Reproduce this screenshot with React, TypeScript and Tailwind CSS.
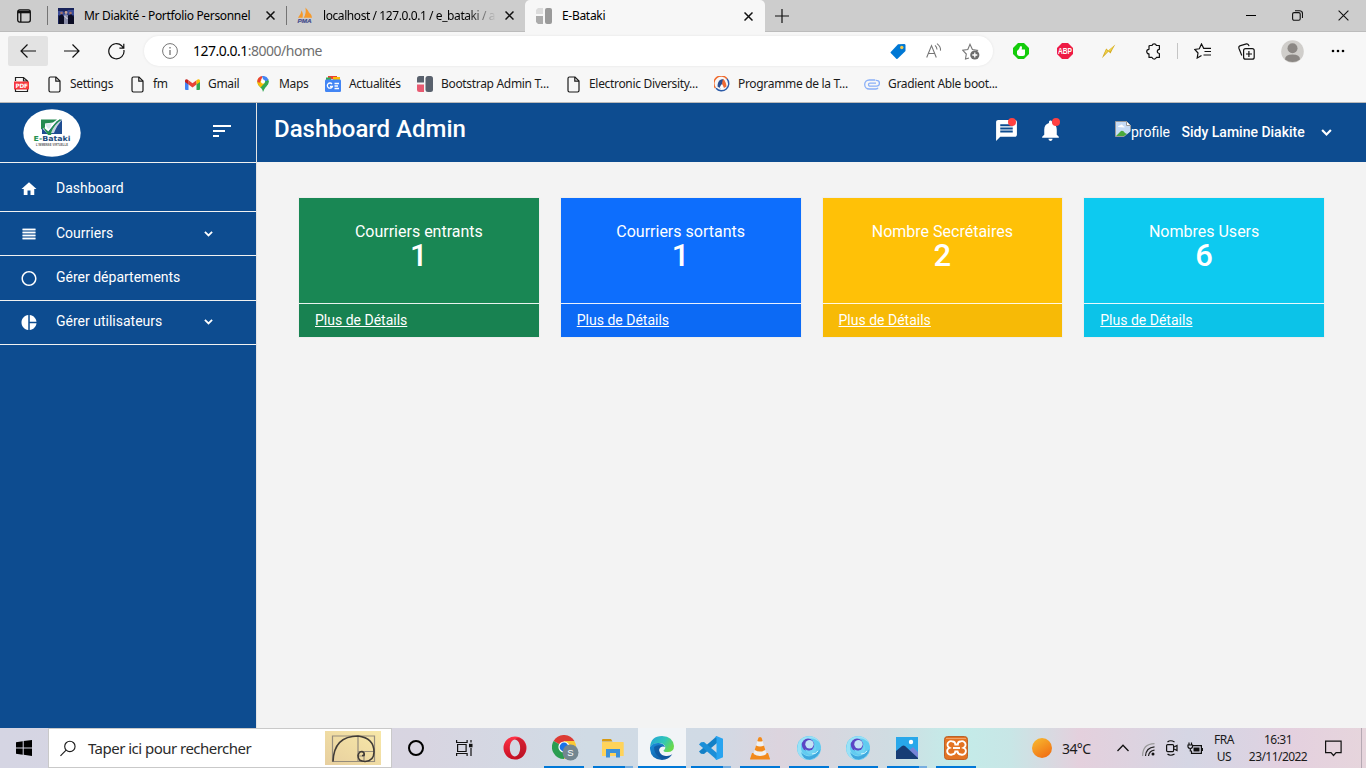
import React from "react";
import {
  MdSort,
  MdMessage,
  MdNotifications,
  MdHome,
  MdPanoramaFishEye,
  MdPieChart,
} from "react-icons/md";

type BoxProps = { className?: string; children?: React.ReactNode };

/* Fixed width icon slot */
const Slot = ({ className = "", children }: BoxProps) => (
  <div className={"flex shrink-0 items-center justify-center " + className}>{children}</div>
);

const CloseX = ({ s = 9, w = 1.5 }: { s?: number; w?: number }) => (
  <svg width={s} height={s} viewBox="0 0 9 9" fill="none" stroke="#111" strokeWidth={w}>
    <path d="M.5.5l8 8M8.500.5l-8 8" />
  </svg>
);

const Chevron = ({ s = 8 }: { s?: number }) => (
  <svg width={s} height={s * 0.7} viewBox="0 0 10 7" fill="none" stroke="#fff" strokeWidth="2">
    <path d="M1 1l4 4 4-4" />
  </svg>
);

const PageIcon = () => (
  <svg width="13" height="17" viewBox="0 0 13 17" fill="none" stroke="#1b1b1b" strokeWidth="1.2">
    <path d="M2.400 1h5.600l4 4v9.600a1.400 1.400 0 0 1-1.400 1.400H2.400A1.400 1.400 0 0 1 1 14.600V2.400A1.400 1.400 0 0 1 2.400 1z" />
    <path d="M7.800 1v4.200H12" />
  </svg>
);

function TabStrip() {
  return (
    <div className="flex h-8 items-stretch border-b border-[#bcbcbc] bg-[#cdcdcd] text-[12px] text-black">
      <Slot className="w-[47px]">
        <svg width="14" height="14" viewBox="0 0 14 14" fill="none" stroke="#111" strokeWidth="1.300">
          <rect x=".7" y=".9" width="12.600" height="12.200" rx="2" />
          <path d="M1 3h12" strokeWidth="2.600" />
          <path d="M3.800 4v9" />
        </svg>
      </Slot>
      <div className="my-1.5 w-px bg-[#747474]" />
      <Slot className="ml-[10px] w-4">
        <svg width="16" height="16" viewBox="0 0 16 16">
          <rect width="16" height="16" fill="#18235a" />
          <path d="M0 3h5l2 3 3-4h6v5l-3 1-4-2-4 3-5-2z" fill="#3c4c96" />
          <path d="M1 16V8l3-2 2 3v7zM10 16V8l3-2 3 3v7z" fill="#0b0d24" />
          <path d="M6 16V7l2-1 2 1v9z" fill="#8b8ea8" />
          <circle cx="3.500" cy="5" r="1.300" fill="#a3726b" />
          <circle cx="8" cy="4.500" r="1.400" fill="#caa598" />
          <circle cx="12.500" cy="5" r="1.300" fill="#a3726b" />
          <path d="M6.500 8l3 3" stroke="#e8e2ef" />
        </svg>
      </Slot>
      <span className="ml-[10px] w-[180px] whitespace-nowrap pt-[7px] leading-[18px] tracking-[-0.33px]">Mr Diakité - Portfolio Personnel</span>
      <Slot className="w-3"><CloseX /></Slot>
      <div className="my-1.5 ml-[10px] w-px bg-[#747474]" />
      <Slot className="ml-[10px] w-4">
        <svg width="17" height="17" viewBox="0 0 17 17">
          <path d="M1 11Q4 8 5 3q2 4 1 8zM7 11Q10 7 9 0q5 5 5 11zM13 11q1-3 0-6 3 3 3 6z" fill="#f59a2c" />
          <text x=".5" y="16.300" fontFamily="Liberation Sans" fontSize="6.200" fontWeight="bold" fontStyle="italic" fill="#454d8d" stroke="#454d8d" strokeWidth=".2" textLength="15" lengthAdjust="spacingAndGlyphs">PMA</text>
        </svg>
      </Slot>
      <span className="ml-[10px] w-[173px] whitespace-nowrap bg-linear-to-r from-black from-80% to-[#cdcdcd] bg-clip-text pt-[7px] leading-[18px] tracking-[-0.42px] text-transparent">localhost / 127.0.0.1 / e_bataki / a</span>
      <Slot className="ml-[7px] w-3"><CloseX /></Slot>
      <div className="ml-[10px] mb-[-1px] flex w-[240px] rounded-t-[5px] bg-[#f7f7f7]">
        <Slot className="ml-[11px] w-4">
          <svg width="16" height="16" viewBox="0 0 16 16">
            <path d="M2 0h5v6H0V2z" fill="#dcdcdc" />
            <path d="M0 8h7v8H2l-2-2z" fill="#ababab" />
            <rect x="9" width="7" height="16" rx="2" fill="#9a9a9a" />
          </svg>
        </Slot>
        <span className="ml-[10px] w-[180px] pt-[7px] leading-[18px] tracking-[-0.3px]">E-Bataki</span>
        <Slot className="w-3"><CloseX /></Slot>
      </div>
      <Slot className="ml-[9px] w-4">
        <svg width="14" height="14" stroke="#111" strokeWidth="1.200"><path d="M7 0v14M0 7h14" /></svg>
      </Slot>
      <Slot className="ml-auto w-[46px]"><div className="h-px w-[10px] bg-black" /></Slot>
      <Slot className="w-[46px]">
        <svg width="11" height="11" viewBox="0 0 11 11" fill="none" stroke="#111" strokeWidth="1.100">
          <rect x=".6" y="2.600" width="7.600" height="7.600" rx="1.500" />
          <path d="M3 .7h4.500a3 3 0 0 1 3 3V8" />
        </svg>
      </Slot>
      <Slot className="w-[46px]"><CloseX s={11} w={0.9} /></Slot>
    </div>
  );
}

function Toolbar() {
  return (
    <div className="flex h-[38px] items-center pl-2">
      <Slot className="h-[30px] w-10 rounded-[2px] bg-[#e3e3e3]">
        <svg width="16" height="14" viewBox="0 0 16 14" fill="none" stroke="#111" strokeWidth="1.200"><path d="M7.500.5L1 7l6.500 6.500M1 7h15" /></svg>
      </Slot>
      <Slot className="ml-1 w-10">
        <svg width="16" height="14" viewBox="0 0 16 14" fill="none" stroke="#111" strokeWidth="1.200"><path d="M8.500.5L15 7l-6.500 6.500M15 7H0" /></svg>
      </Slot>
      <Slot className="ml-1 w-10">
        <svg width="17" height="17" viewBox="0 0 17 17" fill="none" stroke="#111" strokeWidth="1.200">
          <path d="M15.900 7A7.600 7.600 0 1 1 13.700 2.800L15.500 4.800M15.800.8v4.300h-4.400" />
        </svg>
      </Slot>
      <div className="ml-2 flex h-[30px] w-[849px] items-center rounded-full bg-white shadow-[0_0_3px_rgba(0,0,0,0.08)]">
        <Slot className="ml-[18px] w-4">
          <svg width="16" height="16" viewBox="0 0 16 16" fill="none" stroke="#767676">
            <circle cx="8" cy="8" r="7.400" /><path d="M8 7v5M8 4v1.600" strokeWidth="1.300" />
          </svg>
        </Slot>
        <span className="ml-[15px] text-[14px] leading-5 tracking-[-0.5px] text-black">127.0.0.1<span className="text-[#6f6f6f]">:8000/home</span></span>
        <Slot className="ml-auto w-4">
          <svg width="17" height="17" viewBox="0 0 17 17">
            <path d="M8.500.8l6.500-.3a1.500 1.500 0 0 1 1.500 1.500v6L8 16.300a1 1 0 0 1-1.300 0L.8 10.200a1 1 0 0 1 0-1.300z" fill="#0078d4" />
            <circle cx="12.500" cy="4.300" r="1.800" fill="#f2c94c" />
          </svg>
        </Slot>
        <Slot className="ml-5 w-4">
          <svg width="16" height="16" viewBox="0 0 16 16" fill="none" stroke="#767676" strokeWidth="1.100">
            <path d="M.7 14.500L5.500 2.600l4.800 11.900M2.300 10.500h6.400M9 2.300q2 1.700 2 4.200M11 .6q4 3 3.500 7" />
          </svg>
        </Slot>
        <Slot className="ml-5 mr-[13px] w-[18px]">
          <svg width="18" height="17" viewBox="0 0 18 17" fill="none" stroke="#767676" strokeWidth="1.100">
            <path d="M7 15l-3.500 1 .8-5L.8 7.300l5-.8L8 1.300l2.400 5.200 5 .8-1.500 1.500" />
            <circle cx="12.800" cy="12" r="4.600" fill="#6c6c6c" stroke="none" />
            <path d="M12.800 9.500v5M10.300 12h5" stroke="#fff" strokeWidth="1.300" />
          </svg>
        </Slot>
      </div>
      <Slot className="ml-[20px] w-4">
        <svg width="16" height="16" viewBox="0 0 16 16">
          <path d="M5 0h6l5 5v6l-5 5H5l-5-5V5z" fill="#14cc0b" />
          <path d="M4 8Q6.500 6.500 7 3.500 8.800 2 9 4.500L8.700 6.500H12V11q0 2-2 2H6.500Q4.500 13 4 11z" fill="#fff" />
        </svg>
      </Slot>
      <Slot className="ml-7 w-4">
        <svg width="16" height="16" viewBox="0 0 16 16" overflow="visible">
          <path d="M5 0h6l5 5v6l-5 5H5l-5-5V5z" fill="#ee1b44" />
          <text x="1" y="11" fontFamily="Liberation Sans" fontSize="8.200" fontWeight="bold" fill="#fff" textLength="14" lengthAdjust="spacingAndGlyphs">ABP</text>
        </svg>
      </Slot>
      <Slot className="ml-[27px] w-4">
        <svg width="15" height="15" viewBox="0 0 15 15">
          <path d="M14.300.4Q11 6 9.500 9.500L7.500 7.500 1 14.300Q3 9 5.200 4.500L7.300 6.500z" fill="#d3a91e" />
          <path d="M13 2.200L9 7.800 7.500 6.300zM5.400 5.500L7 7.200 3 11z" fill="#efd24a" />
        </svg>
      </Slot>
      <Slot className="ml-[30px] w-4">
        <svg width="16" height="17" viewBox="0 0 16 17" fill="none" stroke="#111" strokeWidth="1.200" strokeLinejoin="round">
          <path d="M4 2.500H6A2.300 2.300 0 0 1 10.400 2.500H13.400V6.300A2.100 2.100 0 0 0 13.400 10.500V14.400H10.400A2.300 2.300 0 0 1 6 14.400H3V10.900A2.300 2.300 0 0 1 3 6.300V3.500Q3 2.500 4 2.500z" />
        </svg>
      </Slot>
      <div className="ml-[15px] h-4 w-px bg-[#c5c5c5]" />
      <Slot className="ml-[16px] w-[17px]">
        <svg width="17" height="16" viewBox="0 0 17 16" fill="none" stroke="#111" strokeWidth="1.200">
          <path d="M7.500 12.500L3.200 15l.8-5L.8 6.500l4.500-.7L7.500 1l2.200 4.300H17M10.500 8.500H17M9.500 12H17" />
        </svg>
      </Slot>
      <Slot className="ml-[27px] w-[17px]">
        <svg width="17" height="17" viewBox="0 0 17 17" fill="none" stroke="#111" strokeWidth="1.200">
          <rect x="5.600" y="5.600" width="10.600" height="10.600" rx="2" />
          <path d="M10.900 8v6M8 11h6M3.800 12.500L1 5.500Q.3 3.200 2.500 2.600L8.500.9q1.800-.4 2.600 2.200" />
        </svg>
      </Slot>
      <Slot className="ml-[26px] w-[23px]">
        <svg width="23" height="23" viewBox="0 0 23 23">
          <circle cx="11.500" cy="11.500" r="11.300" fill="#d0cecb" />
          <circle cx="11.500" cy="8.300" r="5" fill="#8b8784" />
          <path d="M4 19.500q0-5 7.500-5t7.500 5q-7.500 5-15 0z" fill="#8b8784" />
        </svg>
      </Slot>
      <Slot className="ml-[27px] w-[14px]">
        <svg width="14" height="4"><circle cx="2" cy="2" r="1.300" /><circle cx="7" cy="2" r="1.300" /><circle cx="12" cy="2" r="1.300" /></svg>
      </Slot>
    </div>
  );
}

function Bookmark({ className, children, icon }: BoxProps & { icon: React.ReactNode }) {
  return (
    <div className={"flex shrink-0 items-center whitespace-nowrap " + className}>
      <Slot className="mr-2 w-4">{icon}</Slot>
      {children}
    </div>
  );
}

function BookmarkBar() {
  return (
    <div className="flex h-7 items-center pl-[14px] text-[12px] tracking-[-0.32px] text-[#1b1b1b]">
      <Bookmark
        className="w-[32px]"
        icon={
          <svg width="16" height="17" viewBox="0 0 16 17">
            <path d="M1.500 5V1.500h8l4 3.500v10.500h-12V13M9.500 1.500V5h4" fill="none" stroke="#222" strokeWidth="1.200" />
            <rect y="5.500" width="15" height="8" fill="#f6373b" />
            <text x="1.600" y="12" fontFamily="DejaVu Sans" fontSize="6" fontWeight="bold" fill="#fff" textLength="12" lengthAdjust="spacingAndGlyphs">PDF</text>
          </svg>
        }
      />
      <Bookmark className="w-[83px]" icon={<PageIcon />}>Settings</Bookmark>
      <Bookmark className="w-[55px]" icon={<PageIcon />}>fm</Bookmark>
      <Bookmark
        className="w-[71px]"
        icon={
          <svg width="15" height="11" viewBox="0 0 15 11">
            <path d="M0 1.500v8.500q0 1 1 1h2.500V4z" fill="#4285f4" />
            <path d="M15 1.500v8.500q0 1-1 1h-2.500V4z" fill="#34a853" />
            <path d="M3.500 1.200L7.500 4.300l4-3.100v4.300l-4 3.100-4-3.100z" fill="#ea4335" />
            <path d="M0 1.500Q.8-.6 3.500 1.200v4.300L0 3z" fill="#c5221f" />
            <path d="M15 1.500Q14.200-.6 11.500 1.200v4.300L15 3z" fill="#fbbc04" />
          </svg>
        }
      >
        Gmail
      </Bookmark>
      <Bookmark
        className="w-[70px]"
        icon={
          <svg width="12" height="16" viewBox="0 0 12 16">
            <path d="M6 16q-.5-2.500-2.600-5Q0 7.500.3 5L6 5.700l5-3Q13 6.500 9 10.700 6.800 13.500 6 16z" fill="#34a853" />
            <path d="M.3 6.500q-.2-3 1.500-4.700l4 3.500L1.700 9.500Q.4 8 .3 6.500z" fill="#fbbc04" />
            <path d="M1.500 2Q3.500-.3 6 .1L2.400 7 .3 5.500Q.3 3.500 1.500 2z" fill="#ea4335" />
            <path d="M5 .1q4.500-.8 6.400 3.300L7.500 7z" fill="#4285f4" />
            <path d="M1.200 8.800L8 5l3.800 0Q12 8 9 10.700L4 12z" fill="#34a853" />
            <path d="M1.200 8.800L5 4.500l2.500 2.800-4 4.300z" fill="#fbbc04" />
            <circle cx="6" cy="5.600" r="2.100" fill="#fff" />
          </svg>
        }
      >
        Maps
      </Bookmark>
      <Bookmark
        className="w-[92px]"
        icon={
          <svg width="16" height="16" viewBox="0 0 16 16">
            <path d="M3 0h9v3H3z" fill="#ea4335" />
            <path d="M8 1h7v4H8z" fill="#fbbc04" />
            <path d="M1 1.500h5v4H1z" fill="#34a853" />
            <rect y="3.500" width="16" height="12.500" rx="1.200" fill="#4285f4" />
            <path d="M7 8A2.600 2.600 0 1 0 7.400 10.500H5M9.500 7.500H14M9.500 10H13M9.500 12.500H14" fill="none" stroke="#fff" strokeWidth="1.300" />
          </svg>
        }
      >
        Actualités
      </Bookmark>
      <Bookmark
        className="w-[148px]"
        icon={
          <svg width="16" height="16" viewBox="0 0 16 16">
            <path d="M2.500 0H7v6.500H0v-4Q0 0 2.500 0z" fill="#59616d" />
            <path d="M0 8.500h7V16H2.500Q0 16 0 13.500z" fill="#e85a71" />
            <rect x="8.500" width="7.500" height="16" rx="2.500" fill="#59616d" />
          </svg>
        }
      >
        Bootstrap Admin T...
      </Bookmark>
      <Bookmark className="w-[149px]" icon={<PageIcon />}>Electronic Diversity...</Bookmark>
      <Bookmark
        className="w-[150px]"
        icon={
          <svg width="16" height="16" viewBox="0 0 16 16" fill="none">
            <path d="M1.500 12A7.300 7.300 0 0 1 13 2.700" stroke="#f06a2c" strokeWidth="1.400" />
            <path d="M13 2.700A7.300 7.300 0 0 1 2 12.300" stroke="#2c5ba8" strokeWidth="1.400" />
            <path d="M3.500 10.500Q3.500 5 7 3.500L9.500 3l-1 5-2 4.500z" fill="#2c4f93" />
            <path d="M9 3q3 2 3.500 7.500L10 12 8 7.500z" fill="#ef6a35" />
            <path d="M5.500 12l2-4 2 5z" fill="#fff" />
          </svg>
        }
      >
        Programme de la T...
      </Bookmark>
      <Bookmark
        className="w-[150px]"
        icon={
          <svg width="16" height="11" viewBox="0 0 16 11" fill="none" stroke="#8ab0f8" strokeWidth="1.300">
            <path d="M12 4.200H6a1.500 1.500 0 0 0 0 3h6.500a2.300 2.300 0 0 0 0-5.800L11.500 1.200M14 8.800Q13.500 10 12 10H5.200a4.500 4.500 0 0 1 0-9H11" />
          </svg>
        }
      >
        Gradient Able boot...
      </Bookmark>
    </div>
  );
}

function SideItem({ icon, label, arrow, className }: { icon: React.ReactNode; label: string; arrow?: boolean; className: string }) {
  return (
    <div className={"flex items-center border-b border-[#f1f1f1] text-[14px] text-white " + className}>
      <Slot className="ml-5 mt-[2px] w-[18px]">{icon}</Slot>
      <span className="ml-[18px] w-[148px] whitespace-nowrap leading-5">{label}</span>
      {arrow && <div className="mt-[2px]"><Chevron s={9} /></div>}
    </div>
  );
}

function Sidebar() {
  return (
    <aside className="flex w-[257px] shrink-0 flex-col border-r border-[#e4e4e4] bg-[#0d4c90]">
      <div className="flex h-[60px] items-center border-b border-[#f1f1f1]">
        <svg className="ml-[23px] mt-[1px]" width="58" height="48" viewBox="0 0 58 48">
          <ellipse cx="29" cy="24" rx="28.700" ry="23.800" fill="#fff" />
          <path d="M18 10.500h16l-4 3-8 1v4l-4 2z" fill="#248a50" />
          <path d="M34 12l5-1.500V25H19v-6l5 5z" fill="#1f4d91" />
          <path d="M19 17l7 6Q31 14 37 10l1 1Q31 16 28 26h-3z" fill="#249151" />
          <path d="M22 15l7-1-2 5-2 1z" fill="#dce8ee" />
          <path d="M28 24Q31 15 40 10 34 16 31 24z" fill="#fff" opacity=".75" />
          <text x="10.500" y="32.200" fontFamily="DejaVu Sans" fontSize="7" fontWeight="bold" fill="#1f4d7d" textLength="37" lengthAdjust="spacingAndGlyphs"><tspan fill="#249151">E-</tspan>Bataki</text>
          <text x="13" y="37" fontFamily="Liberation Sans" fontSize="2.600" fontWeight="bold" fill="#555" textLength="32">L'IMMENSE VIRTUELLE</text>
        </svg>
        <MdSort className="ml-[129px] mt-[-4px] h-6 w-6 text-white" />
      </div>
      <SideItem className="h-[49px] pt-[2px]" icon={<MdHome className="h-[18px] w-[18px]" />} label="Dashboard" />
      <SideItem
        className="h-11 pb-px"
        arrow
        label="Courriers"
        icon={
          <svg width="14" height="12" viewBox="0 0 14 12">
            <rect x=".5" width="13" height="12" fill="#7398c0" />
            <path d="M.5 1.500h13M.5 4.500h13M.5 7.500h13M.5 10.500h13" stroke="#fff" strokeWidth="1" />
          </svg>
        }
      />
      <SideItem className="h-[45px] pb-[2px]" icon={<MdPanoramaFishEye className="h-[19px] w-[19px]" />} label="Gérer départements" />
      <SideItem className="h-11 pb-[3px]" arrow icon={<MdPieChart className="h-[19px] w-[19px]" />} label="Gérer utilisateurs" />
    </aside>
  );
}

function Header() {
  return (
    <header className="flex h-[59px] items-center bg-[#0d4c90] text-white">
      <h1 className="mb-[7px] ml-[17px] text-[24px] font-medium leading-8">Dashboard Admin</h1>
      <div className="relative mb-1 ml-auto">
        <MdMessage className="h-[25px] w-[25px]" />
        <span className="absolute right-[3px] top-0 h-2 w-2 rounded-full bg-[#ff4141]" />
      </div>
      <div className="relative mb-1 ml-[19px]">
        <MdNotifications className="h-[25px] w-[25px]" />
        <span className="absolute right-[3px] top-0 h-2 w-2 rounded-full bg-[#ff4141]" />
      </div>
      <div className="ml-[52px] flex w-[66.5px] items-center text-[14px]">
        <svg className="mb-2" width="16" height="16" viewBox="0 0 16 16">
          <path d="M.5.5h11l4 4v7L9 15.500H.5z" fill="#c6dcf7" stroke="#9a9a9a" />
          <path d="M11.500.5v4h4" fill="#fff" stroke="#9a9a9a" />
          <path d="M3 6q0-2 2-1.500Q7 2.500 8 5q2 0 1.500 1.500z" fill="#fff" />
          <path d="M1 15l5-5q2-1 4 2l2 1-3 2z" fill="#4aa93c" />
          <path d="M9 16l7-6v6z" fill="#0d4c90" />
        </svg>
        <span>profile</span>
      </div>
      <span className="mb-px w-[139.5px] whitespace-nowrap text-[14px] font-medium leading-5">Sidy Lamine Diakite</span>
      <div className="mr-[34px] mt-px"><Chevron s={11} /></div>
    </header>
  );
}

function StatCard({ title, value, className }: { title: string; value: number; className: string }) {
  return (
    <div className={"flex h-[139px] flex-col text-white shadow-[0_0_0_1px_rgba(0,0,0,0.02)] " + className}>
      <div className="flex h-[105px] flex-col items-center pt-[22px]">
        <span className="text-[16px] leading-6">{title}</span>
        <span className="text-[31px] font-medium leading-[23px]">{value}</span>
      </div>
      <div className="flex flex-1 items-center border-t border-white/90 bg-black/[0.03] pl-4 text-[14px]">
        <a className="underline">Plus de Détails</a>
      </div>
    </div>
  );
}

const Wave = () => (
  <svg width="24" height="24" viewBox="0 0 24 24">
    <circle cx="12" cy="12" r="12" fill="#62cbf0" />
    <path d="M1 8Q4 0 13 .3q7 .4 10 7Q18 1 11 3 3 5 4 13q1 7 9 7 7 0 10-5-2 8-11 9Q1 23 .2 13z" fill="#9ae2f7" />
    <path d="M4 16q4 5 10 4 6-2 9.500-7Q22 22 13 23.800 6 24 4 16z" fill="#3fa8de" />
    <circle cx="11" cy="8.800" r="6.200" fill="#5b45c4" />
    <circle cx="12.500" cy="8.300" r="4.200" fill="#c3e2f5" />
    <path d="M8 13q4 3 8 .5 2-1.500 2-5 3 5-1 9-6 3-9-4.500z" fill="#70d3f2" />
    <path d="M15 18q4 0 6-3" stroke="#d0f4fc" fill="none" />
  </svg>
);

function TaskButton({ children, line = "none" }: { children: React.ReactNode; line?: "none" | "full" | "split" | "active" }) {
  return (
    <div className={"flex h-10 w-12 shrink-0 flex-col items-center " + (line === "active" ? "bg-white/70" : "")}>
      <Slot className="h-[38px] w-12 pt-[2px]">{children}</Slot>
      {line === "active" && <div className="h-[2px] w-12 bg-[#0078d7]" />}
      {line === "full" && <div className="h-[2px] w-10 bg-[#0078d7]" />}
      {line === "split" && (
        <div className="flex h-[2px] w-10 bg-[#0078d7]"><div className="ml-auto w-2 bg-[#76aee0]" /></div>
      )}
    </div>
  );
}

function Taskbar() {
  return (
    <footer className="flex h-10 w-full shrink-0 items-center bg-[linear-gradient(90deg,#d5d5e3_0%,#d8d5e1_31%,#d0dbe5_43%,#d0dae5_52%,#dcd4de_57%,#d0dce2_65%,#c3ece9_70%,#c8e6e6_74%,#e4d0dd_79%,#ddd3e0_83%,#d5d6e4_87%,#dcd3e2_92%,#e4d0df_94%,#e6d5dc_100%)] text-[#1b1b1b]">
      <Slot className="w-12">
        <svg width="16" height="16" viewBox="0 0 16 16"><path d="M0 2.300L6.700 1.300v6.300H0zM7.700 1.100L16 0v7.600H7.700zM0 8.500h6.700v6.300L0 13.800zM7.700 8.500H16V16l-8.300-1.200z" /></svg>
      </Slot>
      <div className="flex h-10 w-[344px] items-center border border-[#c9c9c9] bg-white">
        <Slot className="ml-[11px] w-4">
          <svg width="17" height="17" viewBox="0 0 17 17" fill="none" stroke="#1b1b1b" strokeWidth="1.200"><circle cx="10.500" cy="6.300" r="5.500" /><path d="M6.500 10.200L.5 16.300" /></svg>
        </Slot>
        <span className="ml-[12px] whitespace-nowrap text-[15px] leading-5 tracking-[-0.52px] text-[#2b2b2b]">Taper ici pour rechercher</span>
        <svg className="ml-auto mr-[10px]" width="56" height="34" viewBox="0 0 56 34">
          <defs><linearGradient id="gold" x1="0" y1="1" x2="1" y2="0"><stop stopColor="#e7cf9f" /><stop offset="1" stopColor="#f8e8a8" /></linearGradient></defs>
          <rect width="56" height="34" fill="url(#gold)" />
          <path d="M7.500 5h42v25.500h-42zM33 5v25.500M33 20.500h16.500M39 20.500v10M33 25h6" fill="none" stroke="#958c7c" strokeWidth="1.200" />
          <path d="M8 30.500Q9 5 33 5q16 2 16 16 0 9-9 9.500-7 0-7-6 1-4 4-4 3 1 2 4l-2 0" fill="none" stroke="#403b36" strokeWidth="1.600" />
        </svg>
      </div>
      <Slot className="w-12"><div className="h-4 w-4 rounded-full border-[2px] border-black" /></Slot>
      <Slot className="w-12">
        <svg width="17" height="16" viewBox="0 0 17 16" fill="none" stroke="#111" strokeWidth="1.200">
          <path d="M.6 0v2.500h10.500V0M.6 16v-2.500h10.500V16M1.600 4.500h8.500v7H1.600zM15 0v2.500M15 8v8" />
          <path d="M13 3.800h3.500v3.500H13z" fill="#111" stroke="none" />
        </svg>
      </Slot>
      <div className="ml-[3px] flex gap-px">
        <TaskButton>
          <svg width="24" height="24" viewBox="0 0 24 24">
            <defs><linearGradient id="op" x2="0" y2="1"><stop stopColor="#ff3347" /><stop offset="1" stopColor="#c60d21" /></linearGradient></defs>
            <path fillRule="evenodd" d="M12 .5a11.500 11.500 0 1 0 0 23 11.500 11.500 0 0 0 0-23zm0 3c3 0 5.200 3.800 5.200 8.500S15 20.500 12 20.500 6.800 16.700 6.800 12 9 3.500 12 3.500z" fill="url(#op)" />
            <path d="M12 3.500q4-3 8 .5Q26 12 20 20q-4 3.500-8 .5 5-1 5.200-8.500Q17 4.500 12 3.500z" fill="#ad1424" opacity=".5" />
          </svg>
        </TaskButton>
        <TaskButton line="full">
          <svg width="27" height="26" viewBox="0 0 27 26" className="ml-[3px]">
            <path d="M12 12L1.600 6A12 12 0 0 1 22.400 6z" fill="#dc3b34" />
            <path d="M12 12L1.600 6A12 12 0 0 0 12 24l5-9z" fill="#2a9d4f" />
            <path d="M12 12h5l-5 12A12 12 0 0 0 22.400 6H12z" fill="#fcc934" />
            <circle cx="12" cy="12" r="5.600" fill="#fff" /><circle cx="12" cy="12" r="4.400" fill="#1a73e8" />
            <circle cx="18.500" cy="17.500" r="8" fill="#738690" />
            <text x="18.500" y="21" fontFamily="Liberation Sans" fontSize="9.500" fill="#fff" textAnchor="middle">S</text>
          </svg>
        </TaskButton>
        <TaskButton line="split">
          <svg width="22" height="19" viewBox="0 0 22 19">
            <path d="M0 1q0-1 1-1h8l1.500 2.500H0z" fill="#d89a10" />
            <path d="M0 3h21q.7 0 .7.7V17H0z" fill="#ffd35a" />
            <path d="M4 10h14v8.500h-4V14H8v4.500H4z" fill="#3c91d8" />
          </svg>
        </TaskButton>
        <TaskButton line="active">
          <svg width="24" height="24" viewBox="0 0 24 24">
            <defs>
              <linearGradient id="eg" x2="1" y2=".5"><stop stopColor="#22a1dd" /><stop offset=".6" stopColor="#31c7b7" /><stop offset="1" stopColor="#68d94e" /></linearGradient>
              <linearGradient id="eb" x2="1" y2="1"><stop stopColor="#1a91dd" /><stop offset="1" stopColor="#0c4a91" /></linearGradient>
            </defs>
            <path d="M0 11Q1 0 12 0q11 .5 12 10 0 6-6.500 6-4 0-4-1.600 2.500-1.500 1.500-4.400Q13 7 9 7 3 7 0 11z" fill="url(#eg)" />
            <path d="M0 11q3-4.500 9-4 5 .5 6 4-2-1-4 0-3 2-1.500 5 2 4.500 7.500 4 3 0 5.300-1.700Q18.500 24 12 24 1 23.500 0 13z" fill="url(#eb)" />
            <path d="M4 11q4-3 8-.7-4 1.500-2.500 5.700 2 4.500 7.500 4Q13 24 9 21 4 17 4 11z" fill="#0e4f96" opacity=".65" />
          </svg>
        </TaskButton>
        <TaskButton line="split">
          <svg width="24" height="24" viewBox="0 0 24 24">
            <path d="M18 0L0 15.500l2 2.200 3 .2L18 7z" fill="#1380c6" />
            <path d="M18 24L0 8.500l2-2.200 3-.2L18 17z" fill="#1b8fd8" />
            <path d="M17.500 0L24 2.700v18.600L17.500 24l-2-1.500q2 .2 2-1V2.500q0-1.200-2-1z" fill="#28a4f0" />
          </svg>
        </TaskButton>
        <TaskButton line="full">
          <svg width="20" height="24" viewBox="0 0 20 24">
            <path d="M2 17h16l2 6q0 .5-1 .5H1q-1 0-1-.5z" fill="#f28a1c" />
            <path d="M8.500 1.500q1.500-1 3 0L16.500 18q-6.500 4-13 0z" fill="#f1f1f1" />
            <path d="M8.500 1.500q1.500-1 3 0L12.700 5q-2.700 1.200-5.400 0zM6 9.500q4 2 8 0L15.300 14q-5.300 3-10.600 0z" fill="#f28a1c" />
          </svg>
        </TaskButton>
        <TaskButton line="full"><Wave /></TaskButton>
        <TaskButton line="full"><Wave /></TaskButton>
        <TaskButton line="split">
          <svg width="22" height="22" viewBox="0 0 22 22">
            <rect width="22" height="22" fill="#28a8ea" />
            <path d="M11 15l6-5 5 5v7H13z" fill="#7684d6" />
            <path d="M0 14l6-5q1.500-1 3 0L22 21v1H0z" fill="#173d75" />
            <circle cx="15" cy="5" r="2.200" fill="#fff" />
          </svg>
        </TaskButton>
        <TaskButton line="full">
          <svg width="24" height="24" viewBox="0 0 24 24" fill="none">
            <rect x=".5" y=".5" width="23" height="23" rx="3" fill="#e37322" stroke="#b9622b" />
            <path d="M2 2.500h20" stroke="#f0a36a" />
            <path d="M8.500 5.500A3.400 3.400 0 0 0 5.500 11.800A3.400 3.400 0 0 0 8 18.500Q11 18.500 11.300 15.500H13.500Q14 18.500 17 18.500A3.400 3.400 0 0 0 19.500 11.800A3.400 3.400 0 0 0 16.500 5.500Q13.800 5.700 13.800 8.500H11.300Q11.200 5.500 8.500 5.500z" stroke="#fff" strokeWidth="1.900" />
            <path d="M9 12h7" stroke="#fff" strokeWidth="1.900" />
          </svg>
        </TaskButton>
      </div>
      <svg className="ml-[52px]" width="20" height="20" viewBox="0 0 20 20">
        <defs><linearGradient id="sun" x1=".2" x2=".8" y2="1"><stop stopColor="#f7b72e" /><stop offset="1" stopColor="#f16c12" /></linearGradient></defs>
        <circle cx="10" cy="10" r="10" fill="url(#sun)" />
      </svg>
      <span className="ml-[10px] w-[55px] whitespace-nowrap text-[14px] tracking-[-0.6px]">34°C</span>
      <svg width="12" height="8" viewBox="0 0 12 8" fill="none" stroke="#111" strokeWidth="1.300"><path d="M.5 7L6 1.200 11.500 7" /></svg>
      <svg className="ml-[13px] mt-[3px]" width="13" height="13" viewBox="0 0 13 13" fill="none" stroke="#222" strokeWidth="1.200">
        <path d="M.6 13Q.6.800 12.500.6" stroke="#999" /><path d="M3.500 13Q4 4.500 12.500 3.800M6.500 13Q7 8 12.500 7.200" /><circle cx="11" cy="11" r="1.500" fill="#111" stroke="none" />
      </svg>
      <svg className="ml-[11px]" width="12" height="16" viewBox="0 0 12 16" fill="none" stroke="#111" strokeWidth="1.200">
        <rect x=".6" y="4.600" width="7" height="7" rx="1" /><path d="M8 7l3-1.500v5L8 9M1.500 2q3-2.500 7 0M1.500 14q3 2.500 7 0" />
      </svg>
      <svg className="ml-[9px]" width="16" height="13" viewBox="0 0 16 13" fill="none" stroke="#111" strokeWidth="1.200">
        <path d="M6 3.600h8.400v7.800H4.500V9M15.500 6v3M1 3h4.500v2Q5 6.500 3.300 6.500T1 5zM2 3V.5M4.500 3V.5M3.300 6.500V9h1.500" /><path d="M6.500 5.500h6v4h-6z" fill="#111" stroke="none" />
      </svg>
      <div className="ml-[7px] flex w-[28px] flex-col items-center text-[12px] leading-[17px] tracking-[-0.4px]"><span>FRA</span><span>US</span></div>
      <div className="ml-[6px] flex w-[68px] flex-col items-center whitespace-nowrap text-[12px] leading-[17px] tracking-[-0.55px]"><span>16:31</span><span>23/11/2022</span></div>
      <svg className="ml-[13px]" width="17" height="17" viewBox="0 0 17 17" fill="none" stroke="#111" strokeWidth="1.200"><path d="M.6 1.200h15.500v11.500h-5L8.500 15.500 6 12.700H.6z" /></svg>
      <div className="ml-[19px] h-10 w-px bg-[#b5a9b3]" />
    </footer>
  );
}

export default function App() {
  return (
    <div className="flex h-[768px] w-[1366px] flex-col overflow-hidden bg-[#f3f3f3] font-['Noto_Sans',sans-serif]">
      <div className="flex h-[103px] shrink-0 flex-col border-b border-[#b9b9b9] bg-[#f7f7f7]">
        <TabStrip />
        <Toolbar />
        <BookmarkBar />
      </div>
      <div className="flex min-h-0 flex-1 font-[Roboto,sans-serif]">
        <Sidebar />
        <main className="min-w-0 flex-1">
          <Header />
          <div className="grid grid-cols-4 gap-[22px] pl-[42px] pr-[42px] pt-9">
            <StatCard title="Courriers entrants" value={1} className="bg-[#198754]" />
            <StatCard title="Courriers sortants" value={1} className="bg-[#0d6efd]" />
            <StatCard title="Nombre Secrétaires" value={2} className="bg-[#ffc107]" />
            <StatCard title="Nombres Users" value={6} className="bg-[#0dcaf0]" />
          </div>
        </main>
      </div>
      <Taskbar />
    </div>
  );
}
